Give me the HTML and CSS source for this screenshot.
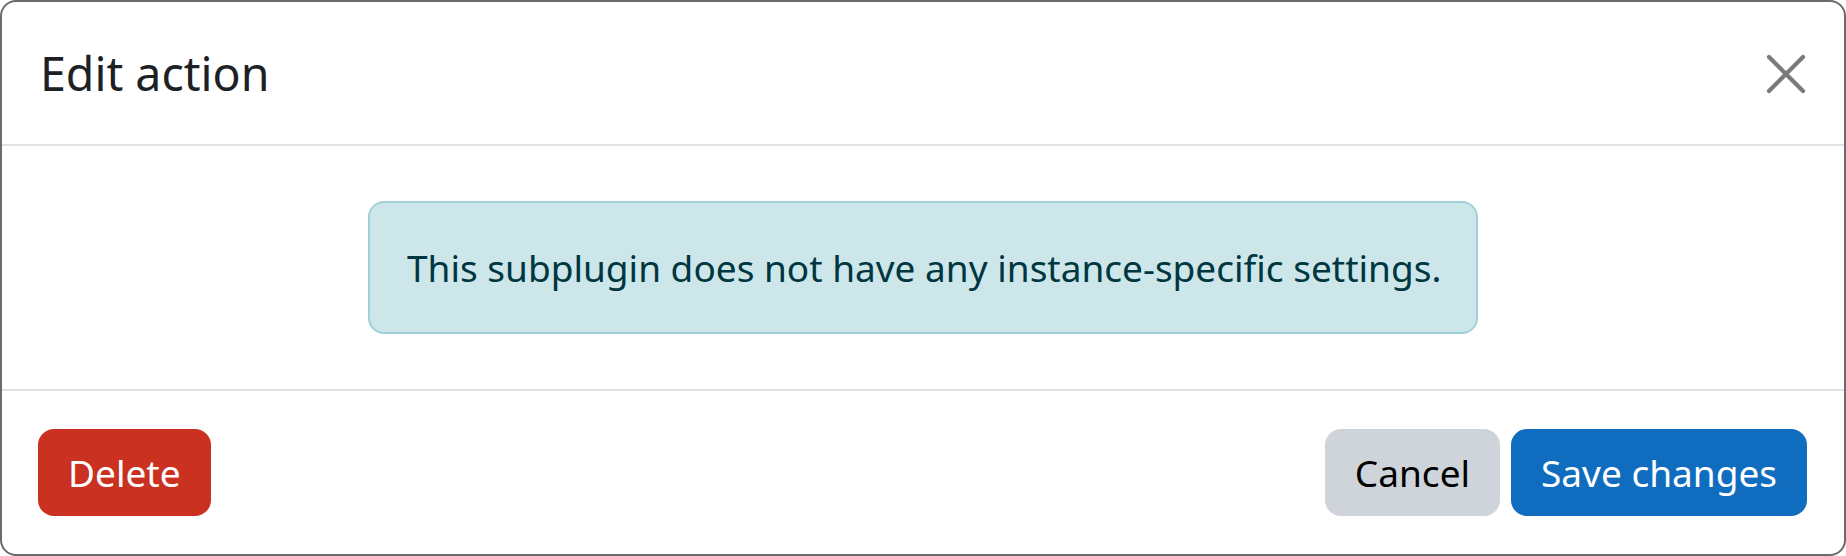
FILE: index.html
```html
<!DOCTYPE html>
<html lang="en">
<head>
<meta charset="utf-8">
<title>Edit action</title>
<link rel="stylesheet" href="styles.css">
</head>
<body>
<div class="modal">
  <div class="modal-header">
    <h5 class="modal-title">Edit action</h5>
    <button class="close" type="button" aria-label="Close">
      <svg width="40" height="40" viewBox="0 0 40 40" aria-hidden="true">
        <path d="M3 3 L37 37 M37 3 L3 37" stroke="#7a7a7a" stroke-width="4.2" stroke-linecap="round" fill="none"/>
      </svg>
    </button>
  </div>
  <div class="modal-body">
    <div class="alert">This subplugin does not have any instance-specific settings.</div>
  </div>
  <div class="modal-footer">
    <button class="btn btn-danger" type="button">Delete</button>
    <div class="spacer"></div>
    <button class="btn btn-secondary" type="button">Cancel</button>
    <button class="btn btn-primary" type="button">Save changes</button>
  </div>
</div>
</body>
</html>
```

FILE: styles.css
```css
html, body {
  margin: 0;
  padding: 0;
  background: #ffffff;
}
body {
  font-family: "Noto Sans", "Open Sans", sans-serif;
  color: #1d2125;
  width: 1846px;
  height: 556px;
  overflow: hidden;
}
.modal {
  box-sizing: border-box;
  width: 1846px;
  height: 556px;
  border: 2px solid #6b6b6b;
  border-radius: 16px;
  background: #fff;
  display: flex;
  flex-direction: column;
}
.modal-header {
  height: 144px;
  flex: none;
  box-sizing: border-box;
  border-bottom: 2px solid #dee2e6;
  display: flex;
  align-items: center;
  padding: 0 38px 0 38px;
}
.modal-title {
  margin: 0;
  flex: 1;
  font-size: 46.5px;
  font-weight: 400;
  line-height: 64px;
  color: #1d2125;
}
.close {
  border: 0;
  background: none;
  padding: 0;
  width: 40px;
  height: 40px;
  display: flex;
  margin-top: 2px;
}
.modal-body {
  height: 243px;
  flex: none;
  box-sizing: border-box;
  padding-top: 55px;
  display: flex;
  justify-content: center;
  align-items: flex-start;
}
.alert {
  box-sizing: border-box;
  width: 1110px;
  height: 133px;
  background: #cce6ea;
  border: 2px solid #a2d0da;
  border-radius: 16px;
  color: #00363f;
  font-size: 37px;
  line-height: 56px;
  padding: 37px 0 0 37px;
  white-space: nowrap;
}
.modal-footer {
  flex: 1;
  border-top: 2px solid #dee2e6;
  display: flex;
  align-items: center;
  padding: 0 37px 0 36px;
  gap: 11px;
}
.spacer {
  flex: 1;
}
.btn {
  box-sizing: border-box;
  height: 87px;
  border: 0;
  border-radius: 16px;
  font-family: "Noto Sans", "Open Sans", sans-serif;
  font-size: 37px;
  line-height: 87px;
  padding: 0 30px;
  white-space: nowrap;
}
.btn-danger {
  background: #ca3120;
  color: #fff;
}
.btn-secondary {
  background: #ced4da;
  color: #000;
}
.btn-primary {
  background: #0f6cbf;
  color: #fff;
}
```
